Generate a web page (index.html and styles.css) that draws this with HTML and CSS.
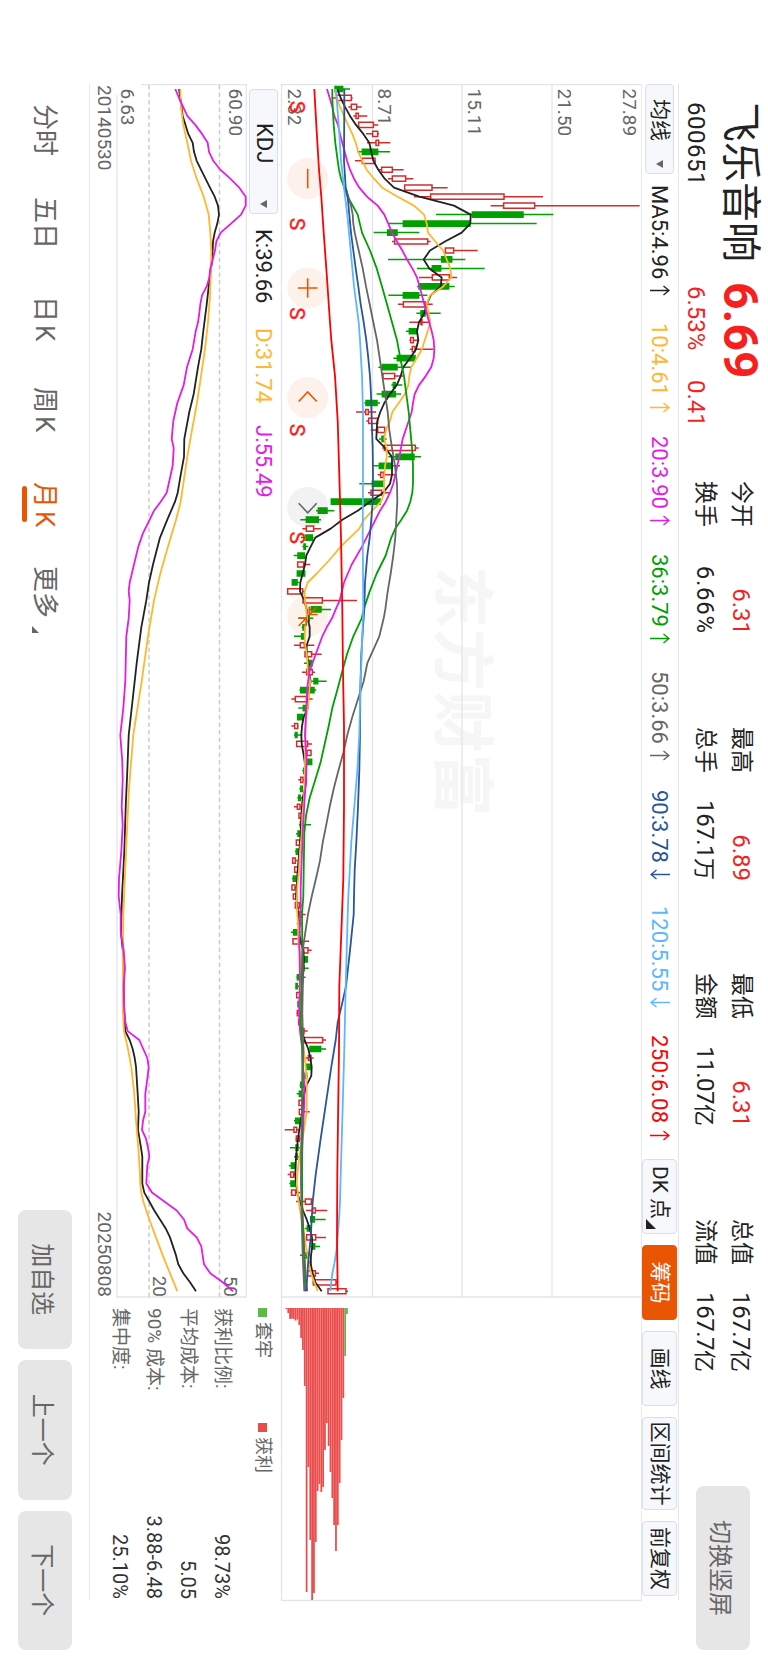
FILE: index.html
```html
<!DOCTYPE html>
<html lang="zh-CN">
<head>
    <meta charset="UTF-8">
    <meta name="viewport" content="width=device-width, initial-scale=1.0">
    <title>飞乐音响 600651</title>
    <link rel="stylesheet" href="styles.css">
</head>
<body>
    <svg class="defs" width="0" height="0">
        <symbol id="up" viewBox="0 0 11 20"><path d="M5.5 20V1M1 6.5L5.500 1L10 6.500"/></symbol>
        <symbol id="down" viewBox="0 0 11 20"><path d="M5.500 0V19M1 13.500L5.500 19L10 13.500"/></symbol>
    </svg>
    <div class="screen">
        <header class="quote">
            <div class="stock">
                <div class="stock-main">
                    <h1>飞乐音响</h1>
                    <span class="price">6.69</span>
                </div>
                <div class="stock-sub">
                    <span class="code">600651</span>
                    <span class="percent">6.53%</span>
                    <span class="change">0.41</span>
                </div>
            </div>
            <div class="figures">
                <div class="figure"><span>今开</span><b class="red">6.31</b></div>
                <div class="figure"><span>最高</span><b class="red">6.89</b></div>
                <div class="figure"><span>最低</span><b class="red">6.31</b></div>
                <div class="figure"><span>总值</span><b>167.7<i>亿</i></b></div>
                <div class="figure"><span>换手</span><b class="rate">6.66%</b></div>
                <div class="figure"><span>总手</span><b>167.1<i>万</i></b></div>
                <div class="figure"><span>金额</span><b>11.07<i>亿</i></b></div>
                <div class="figure"><span>流值</span><b>167.7<i>亿</i></b></div>
            </div>
            <button class="gray-btn switch-btn">切换竖屏</button>
        </header>

        <div class="toolbar">
            <button class="select select-ma"><span>均线</span><span class="caret"></span></button>
            <div class="ma-list">
                <span class="ma5">MA5:4.96<svg><use href="#up"/></svg></span>
                <span class="ma10">10:4.61<svg><use href="#up"/></svg></span>
                <span class="ma20">20:3.90<svg><use href="#up"/></svg></span>
                <span class="ma36">36:3.79<svg><use href="#up"/></svg></span>
                <span class="ma50">50:3.66<svg><use href="#up"/></svg></span>
                <span class="ma90">90:3.78<svg><use href="#down"/></svg></span>
                <span class="ma120">120:5.55<svg><use href="#down"/></svg></span>
                <span class="ma250">250:6.08<svg><use href="#up"/></svg></span>
            </div>
            <div class="tools">
                <button class="tool tool-dk">DK 点</button>
                <button class="tool active">筹码</button>
                <button class="tool">画线</button>
                <button class="tool tool-wide">区间统计</button>
                <button class="tool">前复权</button>
            </div>
        </div>

        <svg class="kline" viewBox="84 126 1518 362" width="1518" height="362">
            <text class="watermark" x="566" y="328">东方财富</text>
            <path class="grid" d="M84.500 216H1297M84.500 306H1297M84.500 395.500H1297"/>
            <path class="frame" d="M84.500 126.200H1600.500V486.500H84.500ZM1297 126V486"/>
            <g id="candles"></g>
            <g id="maLines"></g>
            <g id="chips"></g>
            <g class="axis">
                <text x="88.500" y="145.500">27.89</text>
                <text x="88.500" y="210.500">21.50</text>
                <text x="88.500" y="300.500">15.11</text>
                <text x="88.500" y="390.500">8.71</text>
                <text x="88.500" y="480.500">2.32</text>
            </g>
            <g class="sell">
                <text x="107" y="478.500">S</text>
                <text x="224" y="478.500">S</text>
                <text x="313.500" y="478.500">S</text>
                <text x="430" y="478.500">S</text>
                <text x="537.700" y="478.500">S</text>
            </g>
            <g class="controls">
                <g transform="translate(178.500 460.300)"><circle r="20.500"/><path d="M-9.800 0H9.800"/></g>
                <g transform="translate(288 460.300)"><circle r="20.500"/><path d="M-9.800 0H9.800M0 -9.800V9.800"/></g>
                <g transform="translate(397.500 460.300)"><circle r="20.500"/><path d="M4 -9L-5.500 0L4 9"/></g>
                <g class="disabled" transform="translate(507.300 460.300)"><circle r="20.500"/><path d="M-4 -9L5.500 0L-4 9"/></g>
                <g transform="translate(616 460.300)"><circle r="20.500"/><path d="M-9 -9L-1.500 -2M-9.500 -1.500H-1.500V-10M10 9L2 1.500M2 9.500V1.500H10"/></g>
            </g>
        </svg>

        <div class="lower">
            <div class="kdj">
                <div class="kdj-head">
                    <button class="select select-kdj"><span>KDJ</span><span class="caret"></span></button>
                    <span class="ma5">K:39.66</span>
                    <span class="ma10">D:31.74</span>
                    <span class="ma20">J:55.49</span>
                </div>
                <svg viewBox="84 520 1214 158" width="1214" height="158">
                    <path class="frame" d="M84.500 627V521.700H1297V651H95"/>
                    <path class="dash" d="M85 548.500H1297M85 619H1297"/>
                    <g class="axis">
                        <text x="88.500" y="539.500">60.90</text>
                        <text x="88.500" y="647.500">6.63</text>
                        <text x="85" y="670.500">20140530</text>
                        <text class="end" x="1297" y="670.500">20250808</text>
                        <text class="end" x="1297" y="544.500">50</text>
                        <text class="end" x="1297" y="615">20</text>
                    </g>
                    <g id="kdjLines"></g>
                </svg>
            </div>
            <div class="chip-info">
                <div class="legend">
                    <span class="trapped">套牢</span>
                    <span class="profit">获利</span>
                </div>
                <dl>
                    <div><dt>获利比例:</dt><dd>98.73%</dd></div>
                    <div><dt>平均成本:</dt><dd>5.05</dd></div>
                    <div><dt>90% 成本:</dt><dd>3.88-6.48</dd></div>
                    <div><dt>集中度:</dt><dd>25.10%</dd></div>
                </dl>
            </div>
        </div>

        <footer>
            <nav>
                <a>分时</a>
                <a>五日</a>
                <a>日 K</a>
                <a>周 K</a>
                <a class="active">月 K</a>
                <a class="more">更多</a>
            </nav>
            <div class="actions">
                <button class="gray-btn">加自选</button>
                <button class="gray-btn">上一个</button>
                <button class="gray-btn">下一个</button>
            </div>
        </footer>
    </div>
    <script src="chart.js"></script>
</body>
</html>
```
FILE: styles.css
```css
* {
    box-sizing: border-box;
}

html, body {
    margin: 0;
    width: 768px;
    height: 1662px;
    overflow: hidden;
    background: #fff;
}

body {
    font-family: Roboto, "Noto Sans CJK SC", sans-serif;
    color: #222;
}

button {
    font-family: inherit;
    padding: 0;
    border: none;
    color: inherit;
}

.defs {
    position: absolute;
}

/* landscape page shown on a portrait screen */
.screen {
    width: 1662px;
    height: 768px;
    display: flex;
    flex-direction: column;
    transform-origin: 0 0;
    transform: translateX(768px) rotate(90deg);
}

.red {
    color: #f81f1f;
}

.gray-btn {
    height: 54px;
    border-radius: 8px;
    background: #e6e6e6;
    color: #666;
    font-size: 24px;
}

/* header */
.quote {
    height: 89px;
    padding: 0 12px 0 102px;
    display: flex;
}

.stock {
    width: 379px;
}

.stock-main {
    height: 55px;
    display: flex;
    align-items: center;
}

.stock-main h1 {
    width: 180px;
    margin: 0;
    font-size: 40px;
    font-weight: 400;
    line-height: 55px;
    color: #222;
}

.price {
    font-size: 48px;
    font-weight: 700;
    color: #f81f1f;
    line-height: 55px;
}

.stock-sub {
    display: flex;
    font-size: 24px;
    line-height: 34px;
}

.code {
    width: 184px;
    letter-spacing: 0.5px;
}

.percent {
    width: 94px;
    color: #f81f1f;
}

.change {
    color: #f81f1f;
}

.figures {
    display: grid;
    grid-template-columns: repeat(4, 153px);
    grid-auto-rows: 36px;
    column-gap: 93px;
    padding-top: 9px;
    width: 1005px;
}

.figure {
    display: flex;
    justify-content: space-between;
    font-size: 23px;
    line-height: 36px;
}

.figure b {
    font-weight: 400;
    font-size: 24px;
    letter-spacing: -0.5px;
}

.figure .red {
    letter-spacing: 0;
    margin-right: -1px;
}

.figure .rate {
    letter-spacing: 0.8px;
}

.figure i {
    font-style: normal;
    font-size: 22px;
    letter-spacing: 0;
}

.switch-btn {
    width: 164px;
    margin-top: 18px;
}

/* indicator toolbar */
.toolbar {
    height: 37px;
    margin: 0 62px 0 84px;
    border-top: 1px solid #e2e5ea;
    display: flex;
    align-items: center;
}

.select {
    height: 29px;
    border: 1px solid #dadfe6;
    border-radius: 4px;
    background: #f7f8fb;
    display: flex;
    align-items: center;
    justify-content: space-between;
    font-size: 21px;
    line-height: 26px;
    white-space: nowrap;
}

.select-ma {
    width: 90px;
    margin-right: 11px;
    padding: 0 5px 0 14px;
}

.caret {
    border: 4px solid transparent;
    border-top: 7px solid #666;
    border-bottom: none;
}

.ma-list {
    width: 974px;
    display: grid;
    grid-template-columns: 138px 113px 118px 117px 119px 116px 129px 124px;
    font-size: 22px;
    line-height: 35px;
}

.ma-list span {
    display: flex;
    align-items: center;
}

.ma-list svg {
    width: 11px;
    height: 20px;
    margin-left: 6px;
    fill: none;
    stroke: currentColor;
    stroke-width: 1.4;
}

.ma5 { color: #222; }
.ma10 { color: #ffb72f; }
.ma20 { color: #e41ce8; }
.ma36 { color: #00a000; }
.ma50 { color: #666; }
.ma90 { color: #2a5599; }
.ma120 { color: #5db7ff; }
.ma250 { color: #ff0000; }

.ma-list .ma250 {
    letter-spacing: 0.4px;
}

.tools {
    display: flex;
    gap: 11px;
}

.tool {
    width: 75px;
    height: 35px;
    border: 1px solid #dadfe6;
    border-radius: 4px;
    background: #f7f8fb;
    font-size: 21px;
    line-height: 32px;
    white-space: nowrap;
}

.tool.active {
    background: #ea5504;
    border-color: #ea5504;
    color: #fff;
}

.tool-wide {
    width: 93px;
}

.tool-dk {
    position: relative;
    padding-right: 8px;
}

.tool-dk::after {
    content: "";
    position: absolute;
    right: 4px;
    bottom: 3px;
    border-left: 10px solid transparent;
    border-bottom: 10px solid #222;
}

/* charts */
.kline {
    display: block;
    flex: none;
    margin-left: 84px;
}

.frame, .grid {
    fill: none;
    stroke: #e2e5ea;
    stroke-width: 1.3;
}

.dash {
    fill: none;
    stroke: #ccc;
    stroke-width: 1.5;
    stroke-dasharray: 4.5 3;
}

.watermark {
    font-family: "Noto Sans CJK SC", sans-serif;
    font-size: 62.500px;
    font-weight: 700;
    fill: #f6f6f7;
}

.axis text {
    font-size: 19px;
    fill: #666;
}

.axis .end {
    text-anchor: end;
}

.sell text {
    font-size: 21px;
    fill: #ff1a1a;
    stroke: #ff1a1a;
    stroke-width: 0.4;
    text-anchor: middle;
}

.controls circle {
    fill: rgba(234, 85, 4, 0.08);
}

.controls path {
    fill: none;
    stroke: #ea5504;
    stroke-width: 1.6;
}

.controls .disabled circle {
    fill: rgba(90, 90, 90, 0.08);
}

.controls .disabled path {
    stroke: #666;
}

.line {
    fill: none;
    stroke: currentColor;
    stroke-width: 1.8;
    stroke-linejoin: round;
}

.up {
    fill: #fff;
    stroke: #d22c2c;
    stroke-width: 1.5;
}

.down {
    fill: #00a000;
    stroke: #00a000;
    stroke-width: 1.5;
}

.chip-profit { fill: #ea4b4b; }
.chip-trapped { fill: #5cba47; }

/* KDJ and chip statistics */
.lower {
    height: 191px;
    margin: 0 62px 0 84px;
    border-bottom: 1px solid #e8eaee;
    display: flex;
}

.kdj {
    width: 1214px;
}

.kdj svg {
    display: block;
}

.kdj-head {
    height: 32px;
    padding-left: 5px;
    display: flex;
    align-items: center;
    font-size: 22px;
}

.kdj-head > span {
    width: 93px;
    margin-right: 4px;
}

.kdj-head > .ma5 {
    width: 95px;
}

.select-kdj {
    width: 125px;
    margin-right: 15px;
    padding: 0 5px 0 33px;
    font-size: 22px;
}

.chip-info {
    width: 302px;
    padding: 3px 1px 0 10px;
    color: #666;
}

.legend {
    display: flex;
    font-size: 18px;
    line-height: 28px;
}

.legend span {
    width: 115px;
    display: flex;
    align-items: center;
    gap: 5px;
}

.legend span::before {
    content: "";
    width: 9px;
    height: 9px;
}

.legend .trapped::before { background: #5cba47; }
.legend .profit::before { background: #ea4b4b; }

.chip-info dl {
    margin: 10px 0 0;
}

.chip-info dl div {
    display: flex;
    justify-content: space-between;
    font-size: 19px;
    line-height: 34px;
}

.chip-info dd {
    margin: 0;
    font-size: 20px;
    color: #333;
}

/* footer */
footer {
    height: 89px;
    padding: 0 12px 1px 104px;
    display: flex;
    justify-content: space-between;
    align-items: center;
}

nav {
    display: grid;
    grid-template-columns: 93px 99px 91px 95px 84px 70px;
    font-size: 26px;
    line-height: 60px;
    color: #666;
    white-space: nowrap;
    word-spacing: -3.5px;
}

nav a {
    position: relative;
}

nav .active {
    color: #ea5504;
}

nav .active::after {
    content: "";
    position: absolute;
    left: 4px;
    bottom: 7px;
    width: 36px;
    height: 5px;
    border-radius: 3px;
    background: #ea5504;
}

nav .more::after {
    content: "";
    position: absolute;
    left: 60px;
    bottom: 17px;
    border-left: 7px solid transparent;
    border-bottom: 7px solid #666;
}

.actions {
    display: flex;
    gap: 11px;
}

.actions button {
    width: 139.500px;
}
```
FILE: chart.js
```js
const FIRST_X = 89;
const STEP = 8.972;

const xAt = i => FIRST_X + i * STEP;
const mainY = v => 498 - v / 3;
const kdjY = v => 688 - v / 3;

// g = falling month, r = rising month: low, body low, body high, high
const candles = `
g195,195,218,240 r185,200,244,248 r235,244,260,275 r250,258,265,292 r264,266,310,325
r288,308,323,327 r291,318,326,361 g262,277,323,360 r255,277,315,318 r325,335,367,401
r354,367,407,430 r402,404,486,533 r432,482,702,819 r662,701,794,1109 g498,607,759,850
g355,400,600,800 g311,353,381,448 r366,374,473,482 r525,526,551,623 g354,515,545,586
g441,487,512,644 r447,487,538,561 g441,447,536,554 g355,400,446,472 r384,400,465,488
g439,453,465,512 r418,453,456,480 g408,418,441,441 r418,422,430,445 r420,427,435,490
g370,382,435,435 g325,337,381,423 r337,339,374,400 g364,370,376,397 g320,337,376,393
g283,288,321,330 r258,287,295,318 r289,296,323,323 r302,323,344,350 g327,336,340,350
r337,343,436,446 g355,378,432,453 g310,328,366,390 r323,332,340,377 g268,307,340,340
r294,303,335,360 g184,184,330,330 g138,145,171,193 g91,109,145,153 r97,109,131,153
g93,106,127,131 g97,102,106,115 g71,84,103,103 r82,83,101,121 g80,82,104,104
g66,67,81,87 r52,53,98,105 r97,99,157,261 g120,124,153,183 g85,110,118,130
g95,99,104,108 g72,95,100,103 r72,91,103,133 r103,105,125,155 g102,113,126,128
r96,110,127,135 g125,132,143,170 g88,92,132,139 r64,76,110,128 g85,100,106,108
g82,83,99,99 r64,74,83,86 g72,76,81,97 r78,80,113,126 r108,111,123,124
g105,110,125,125 g97,101,105,108 r85,92,99,102 g88,92,97,99 g82,86,91,97
r72,82,90,95 r85,87,97,97 g87,91,97,123 g78,84,88,95 r78,79,89,93
g75,79,86,90 r66,68,76,82 r72,74,86,86 g66,70,78,80 r64,66,75,84
r69,70,80,84 r75,76,88,98 r84,88,97,107 g80,88,90,97 g63,71,82,92
r67,69,92,117 r97,101,114,125 g98,104,112,112 g97,99,102,116 g79,82,93,107
g76,78,82,90 r78,80,92,95 g82,84,92,99 r79,82,91,95 r85,86,92,95
r92,98,102,113 r100,103,158,168 g118,120,152,168 r107,115,123,131 g107,109,122,123
g100,105,110,113 g89,92,102,105 g80,88,96,100 r85,87,97,97 r86,88,96,119
g72,77,92,93 r44,72,80,90 r76,79,88,92 g60,78,84,90 g72,78,82,88
g57,64,75,77 r53,62,71,76 g58,63,75,80 r62,65,77,90 r78,106,124,128
r108,128,136,172 g120,122,133,167 g104,112,120,124 r108,110,137,168 g118,127,134,150
g90,108,114,118 r115,118,122,125 r112,113,136,147 r127,130,198,203 r172,174,228,234`;

// index:level points
const maLines = {
    ma5: '0:202 1:212 2:225 3:240 4:258 5:280 6:298 7:304 8:310 9:325 10:344 11:372 12:448 13:552 14:602 15:601 16:575 17:525 18:480 19:461 20:478 21:515 22:512 23:482 24:470 25:463 26:447 27:441 28:445 29:438 30:420 31:400 32:392 33:380 34:360 35:343 36:331 37:322 38:320 39:319 40:345 41:366 42:366 43:366 44:360 45:340 46:300 47:263 48:217 49:182 50:136 51:122 52:109 53:105 54:98 55:91 56:90 57:103 58:110 59:113 60:119 61:119 62:110 63:110 64:116 65:116 66:122 67:117 68:114 69:113 70:101 71:96 72:94 73:95 74:100 75:104 76:106 77:109 78:105 79:98 80:96 81:94 83:92 85:88 87:83 89:80 90:78 91:82 92:85 93:86 94:87 95:92 96:100 97:102 99:99 101:94 103:90 104:90 105:95 106:104 107:115 108:121 109:125 110:124 111:110 112:103 114:97 115:92 117:84 119:78 121:76 122:78 123:82 124:90 125:99 126:110 127:119 128:126 129:127 130:123 131:122 132:128 133:136 134:155',
    ma10: '0:195 1:200 2:210 3:222 4:234 5:247 6:257 7:265 8:277 9:290 10:312 11:337 12:383 13:432 14:462 15:470 16:474 17:496 18:519 19:530 20:541 21:544 22:520 23:480 24:470 25:476 26:481 27:473 28:464 29:456 30:440 31:424 32:418 33:415 34:405 35:386 36:367 37:360 38:348 39:343 40:350 41:350 42:345 43:343 44:342 45:343 46:333 47:307 48:282 49:268 50:240 51:212 52:190 53:166 54:140 55:113 56:104 57:104 58:109 59:112 60:105 61:104 62:106 63:110 64:113 65:113 66:121 67:118 68:116 69:113 70:109 71:107 73:106 75:105 77:104 79:102 81:97 83:95 85:90 87:87 89:82 91:80 93:84 95:85 97:92 99:94 101:94 103:92 105:94 107:101 109:107 111:110 113:110 114:110 115:106 116:102 118:92 120:85 121:82 122:80 123:83 124:86 125:90 126:95 127:100 128:104 129:108 130:113 131:117 132:123 133:133 134:143',
    ma20: '0:171 1:179 2:187 3:193 4:204 5:210 6:217 7:224 8:231 9:240 10:252 11:268 12:291 13:323 14:343 15:355 16:366 17:381 18:397 19:411 20:427 21:441 23:456 25:470 27:485 28:491 29:493 30:491 31:484 32:467 33:447 34:434 35:429 36:425 37:416 39:398 41:388 43:376 44:370 45:360 46:347 47:330 49:303 51:276 53:245 55:222 57:209 58:197 59:186 60:170 61:157 63:137 65:118 67:111 69:109 72:105 75:110 77:108 79:104 83:98 87:94 89:92 91:92 95:88 99:90 103:87 105:90 107:97 109:99 111:103 113:103 116:99 119:96 122:96 125:97 128:101 131:105 133:108 134:112',
    ma36: '0:187 1:187 2:188 4:191 6:196 8:203 9:207 10:213 12:233 14:263 16:276 18:300 20:320 22:336 24:351 26:366 28:381 30:391 32:402 34:409 36:416 38:421 40:426 42:429 44:429 45:427 46:421 47:411 48:394 49:376 50:364 52:347 54:320 56:299 58:281 59:275 61:250 63:231 65:216 67:202 69:187 71:176 73:164 75:152 77:136 79:119 81:108 83:103 87:101 90:100 92:96 96:97 100:95 104:92 107:97 111:97 115:97 121:96 125:97 129:101 132:104 134:105',
    ma50: '11:227 12:235 13:243 14:248 15:250 16:254 18:266 20:278 22:288 24:299 26:310 28:321 30:329 32:337 34:345 36:353 38:358 40:366 42:375 44:381 46:382 48:379 50:376 52:370 54:362 56:353 58:346 59:341 61:328 62:316 63:304 64:292 66:281 68:264 70:247 72:232 74:220 76:205 78:191 80:179 82:169 84:158 86:150 88:138 90:125 92:114 94:106 96:98 99:99 103:97 107:100 111:98 115:95 119:93 122:93 126:95 130:98 134:103',
    ma90: '0:223 2:223 8:222 11:227 12:233 14:238 16:243 18:250 20:257 22:265 24:272 26:281 28:289 30:295 32:300 34:303 37:305 40:308 43:309 46:308 48:304 50:299 52:292 55:285 58:283 60:279 63:274 67:271 72:270 76:268 80:264 84:259 87:254 90:252 92:251 96:240 100:228 102:216 104:203 106:197 109:184 113:168 117:152 121:137 124:128 128:122 131:114 134:109',
    ma120: '0:198 5:208 8:213 11:222 14:232 18:242 22:252 26:266 28:270 32:276 36:279 43:279 50:278 58:280 63:275 67:271 72:268 76:262 80:253 84:244 90:235 92:233 100:227 107:223 115:217 121:212 124:210 126:207 129:201 130:197 131:193 132:187 133:184 134:181',
    ma250: '0:133 4:139 9:147 12:154 16:161 20:169 26:180 28:184 32:195 37:203 43:208 50:213 58:217 65:219 71:222 80:222 88:220 92:216 100:208 107:207 115:204 121:202 128:201 134:203'
};

const kdjLines = {
    ma5: '0:297 1:301 3:308 5:325 6:338 7:342 8:350 9:363 11:390 12:404 13:414 14:417 15:412 16:404 17:399 19:397 21:389 24:380 27:370 29:364 31:354 34:341 36:328 39:313 41:312 43:302 45:293 46:285 48:262 50:240 53:219 55:207 57:199 60:184 64:170 68:158 72:146 76:142 80:137 85:133 90:126 94:123 97:131 102:131 105:136 106:149 107:158 108:164 109:168 112:173 114:176 116:174 118:183 119:187 122:187 123:193 124:208 125:223 126:240 127:257 128:270 129:279 130:288 131:295 132:310 133:330 134:348',
    ma10: '0:301 2:303 4:310 6:322 8:333 10:350 12:371 14:386 16:391 18:394 20:393 23:390 26:384 29:375 32:363 35:351 38:336 41:322 44:310 46:302 48:288 51:264 54:241 57:222 61:204 66:185 72:160 78:147 85:138 92:130 97:129 103:129 105:132 107:144 109:154 112:163 115:168 118:175 121:180 122:181 123:184 124:190 126:208 128:228 130:248 132:270 134:292',
    ma20: '0:286 1:297 3:322 4:346 5:366 6:383 7:387 8:400 9:421 10:451 11:478 12:497 13:497 14:483 15:453 16:422 17:409 18:405 19:398 20:391 21:388 22:380 23:366 24:361 25:358 26:354 27:347 29:338 31:321 33:311 35:292 37:280 39:275 40:281 42:278 43:272 44:266 45:260 46:242 47:222 48:209 49.500:189 51:175 53:162 55:149 56:146 57:149 59:146 61:139 64:137 66:136 69:130 72:121 75:127 77:128 80:125 82:128 85:124 88:117 90:116 92:122 94:122 96:131 98:135 100:131 102:132 104:136 105:143 106:178 107:190 108:202 109:206 110:203 112:196 114:196 115:189 116:186 117:198 118:204 119:208 120:202 122:199 123:216 125:290 126:312 127:322 128:350 129:364 131:372 132:391 133:428 134:459'
};

function el(parent, name, attrs) {
    const node = document.createElementNS('http://www.w3.org/2000/svg', name);
    for (const key in attrs) node.setAttribute(key, attrs[key]);
    parent.appendChild(node);
}

function drawCandles() {
    const group = document.getElementById('candles');
    candles.trim().split(/\s+/).forEach((item, i) => {
        const [low, bottom, top, high] = item.slice(1).split(',').map(v => mainY(+v));
        const x = xAt(i);
        const d = `M${x} ${high}V${top}M${x} ${bottom}V${low}M${x - 2.6} ${top}H${x + 2.6}V${bottom}H${x - 2.6}Z`;
        el(group, 'path', { d, class: item[0] === 'g' ? 'down' : 'up' });
    });
}

function drawLines(id, lines, toY) {
    const group = document.getElementById(id);
    for (const name of ['ma5', 'ma10', 'ma20', 'ma36', 'ma50', 'ma90', 'ma120', 'ma250']) {
        if (!lines[name]) continue;
        const points = lines[name].split(' ').map(p => {
            const [i, v] = p.split(':').map(Number);
            return xAt(i).toFixed(1) + ',' + toY(v).toFixed(1);
        });
        el(group, 'polyline', { points: points.join(' '), class: 'line ' + name });
    }
}

// length of each chip bar, cheapest price first
const chips = [1, 5, 11, 10.5, 11, 12.5, 11.5, 17, 30, 42, 78, 284, 159, 232, 292, 285, 234, 183, 176, 184, 179, 142, 115, 138, 164, 190, 217, 243, 217, 175, 132, 90, 48, 6];

function drawChips() {
    const group = document.getElementById('chips');
    chips.forEach((width, i) => {
        el(group, 'rect', {
            x: 1308,
            y: 768 - 287.3 - i * 1.835,
            width,
            height: 1.75,
            class: i > 31 ? 'chip-trapped' : 'chip-profit'
        });
    });
}

drawCandles();
drawLines('maLines', maLines, mainY);
drawLines('kdjLines', kdjLines, kdjY);
drawChips();
```
